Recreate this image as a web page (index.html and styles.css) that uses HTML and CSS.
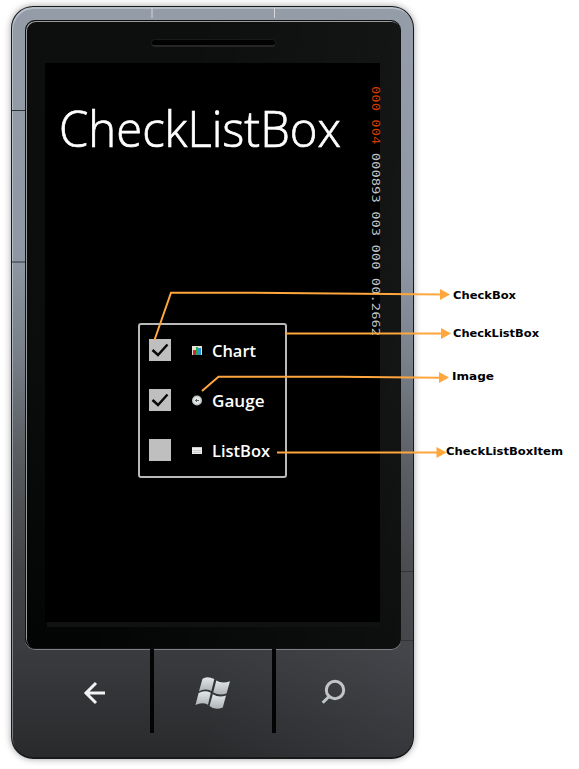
FILE: index.html
```html
<!DOCTYPE html>
<html lang="en">
<head>
<meta charset="utf-8">
<title>CheckListBox</title>
<link rel="stylesheet" href="styles.css">
</head>
<body>
<main class="figure">
  <div class="phone">
    <div class="bezel">
      <div class="speaker"></div>
      <div class="screen">
        <h1 class="title"><svg width="300" height="66"><text x="13" y="51" textLength="282" lengthAdjust="spacingAndGlyphs">CheckListBox</text></svg></h1>
        <ul class="checklist">
          <li class="item">
            <span class="box"><svg width="22" height="22"><path d="M3.500 11 9 16 18.500 5.500"/></svg></span>
            <svg class="icon" width="11" height="11"><path fill="#e9e2d2" d="M0 1h10v9H0z"/><path fill="#d8212b" d="M1 5h3v5H1z"/><path fill="#25b34b" d="M4 2h2v8H4z"/><path fill="#2993d1" d="M6 3h3v7H6z"/></svg>
            <svg class="name" width="60" height="26"><text x="0" y="20" textLength="44" lengthAdjust="spacingAndGlyphs">Chart</text></svg>
          </li>
          <li class="item">
            <span class="box"><svg width="22" height="22"><path d="M3.500 11 9 16 18.500 5.500"/></svg></span>
            <svg class="icon" width="11" height="11"><circle cx="5" cy="5.5" r="5" fill="#c3c7c8"/><circle cx="5" cy="5.5" r="3.4" fill="#e3e7e8"/><path d="M3 5.500h4M4.500 4v3" stroke="#596365"/></svg>
            <svg class="name" width="60" height="26"><text x="0" y="20" textLength="52.5" lengthAdjust="spacingAndGlyphs">Gauge</text></svg>
          </li>
          <li class="item">
            <span class="box"></span>
            <svg class="icon" width="11" height="11"><path fill="#eee" d="M0 2h10v7H0z"/><path stroke="#ccc" d="M0 2.500h10M1 5.500h8M1 7.500h8"/></svg>
            <svg class="name" width="60" height="26"><text x="0" y="20" textLength="58" lengthAdjust="spacingAndGlyphs">ListBox</text></svg>
          </li>
        </ul>
        <svg class="counter" width="12" height="256"><g transform="translate(2 0) rotate(90) scale(1.26 1)"><text class="hot" x="0" y="0">000 004</text><text x="53" y="0">000893 003 000 00.2662</text></g></svg>
      </div>
      <div class="lip"></div>
    </div>
    <nav class="keys">
      <span class="key"><svg width="30" height="30" class="back"><path d="M28 15H8M19 5 9 15 19 25"/></svg></span>
      <span class="key"><svg width="36" height="32"><g fill="url(#metal)"><path d="M6.500 1.800Q11-1.400 18.300 2L15.400 14Q9 11 3 14.200Z"/><path d="M20.300 3.400Q26 7 34 4.200L30.500 16.400Q24 19 17.200 15.500Z"/><path d="M2.600 16Q8.500 12.800 14.800 15.700L12 27.800Q6 24.800-.5 28Z"/><path d="M16.800 17.300Q23 21 30 18.400L26.800 30.400Q19 33.800 13.500 29Z"/></g><defs><linearGradient id="metal" x2="0" y2="1"><stop stop-color="#e4e8ea"/><stop offset="1" stop-color="#aeb3b7"/></linearGradient></defs></svg></span>
      <span class="key"><svg width="30" height="30" class="search"><circle cx="18" cy="12" r="8.7"/><path d="M12 18.500 5.700 24.800"/></svg></span>
    </nav>
  </div>
  <svg class="notes" width="579" height="769" viewBox="0 0 579 769">
    <path class="seam" d="M12 110.500h13M12 262h13M401 571.500h12M401 640.500h12"/>
    <path class="seam light" d="M152 8v10M274.500 8v10"/>
    <path class="line" d="M154.500 340 171 292.700H238L442 294.500M286 333.500H442M202 391 218.500 376.800H340L440 377.700M277 452.500H438"/>
    <path class="head" d="m440 289 10 5.500-10 5.500zM441 328l10 5.500-10 5.500zM439 372l10 5.500-10 5.500zM436.500 447l10 5.500-10 5.500z"/>
    <g class="labels">
      <text x="453" y="299" textLength="63" lengthAdjust="spacingAndGlyphs">CheckBox</text>
      <text x="453" y="337" textLength="86" lengthAdjust="spacingAndGlyphs">CheckListBox</text>
      <text x="452" y="380" textLength="42" lengthAdjust="spacingAndGlyphs">Image</text>
      <text x="446" y="455" textLength="117" lengthAdjust="spacingAndGlyphs">CheckListBoxItem</text>
    </g>
  </svg>
</main>
</body>
</html>
```
FILE: styles.css
```css
* { box-sizing: border-box; }
body { margin: 0; background: #fff; overflow: hidden; }
.figure { position: relative; width: 579px; height: 769px; padding: 6px 0 0 11px; }
svg { display: block; overflow: visible; }
.phone {
  width: 403px; height: 753px; padding: 13px 12px 0 13px;
  border: solid #17191b; border-width: 1px 1px 2px;
  border-radius: 22px;
  background:
    linear-gradient(100deg, transparent 60%, rgba(160,170,190,.1)),
    linear-gradient(#949ca8, #8e97a3 250px, #777e87 350px, #55585c 460px, #434447 560px, #3b3c3f 640px, #292a2c);
  box-shadow: 0 0 7px rgba(0,0,0,.38), inset 1px 2px 0 rgba(225,230,235,.45);
}
.bezel {
  height: 629px; width: 376px; padding: 18px 18px 0 19px;
  display: flex; flex-direction: column; align-items: flex-start;
  border: 1px solid #101112; border-radius: 10px;
  background: linear-gradient(100deg, transparent 35%, rgba(255,255,255,.045)), linear-gradient(#0d0f0f, #0b0c0c 55%, #030404);
  box-shadow: inset 1px 1px 0 #999b9b, 0 1px 0 #7d7f81;
}
.speaker { width: 125px; height: 8px; margin-left: 106px; border-radius: 4px; background: #020202; border: 1px solid #191a1a; border-bottom: 2px solid #252626; }
.screen { position: relative; flex: none; width: 335px; height: 559px; margin: 16px 0 0; background: #000; }
.title { margin: 0; padding: 33px 0 0 1px; height: 260px; font: 300 49px "Open Sans", "Noto Sans", sans-serif; }
.title text { fill: #fff; stroke: #fff; stroke-width: .7px; }
.checklist {
  list-style: none; margin: 0 0 0 93px; padding: 0; width: 149px; height: 155px;
  border: 2px solid #b9b9b9; border-radius: 3px;
}
.item { display: flex; align-items: center; height: 50px; padding-left: 9px; }
.box { width: 22px; height: 22px; background: #bfbfbf; }
.box path { fill: none; stroke: #0a0a0a; stroke-width: 2.5; }
.icon { margin-left: 21px; }
.name { margin-left: 9px; font: 600 17px "Open Sans", "Noto Sans", sans-serif; }
.name text { fill: #fff; }
.counter { position: absolute; left: 325px; top: 23px; font: 11px "DejaVu Sans Mono", monospace; }
.counter text { fill: #c4c4c4; white-space: pre; }
.counter .hot { fill: #d63b00; }
.lip { width: 333px; height: 5px; margin-left: 2px; flex: none; background: #101111; }
.keys { display: flex; height: 84px; width: 376px; }
.key { flex: 1; display: flex; align-items: center; justify-content: center; padding-top: 4px; }
.key + .key { border-left: 4px solid #020303; }
.key:nth-child(1) { flex: 0 0 125px; padding-left: 8px; }
.key:nth-child(2) { flex: 0 0 122px; padding-left: 2px; }
.key:nth-child(3) { padding-right: 13px; }
.key svg { flex: none; }
.back path { fill: none; stroke: #f3f3f3; stroke-width: 3; }
.search { fill: none; stroke: #c2c5c8; stroke-width: 3; }
.notes { position: absolute; left: 0; top: 0; }
.seam { stroke: #30353a; stroke-width: 1; }
.seam.light { stroke: #d3d7da; }
.line { fill: none; stroke: #ffa63d; stroke-width: 2; }
.head { fill: #ffa63d; }
.labels { font: bold 11px "DejaVu Sans", sans-serif; fill: #000; }
```
